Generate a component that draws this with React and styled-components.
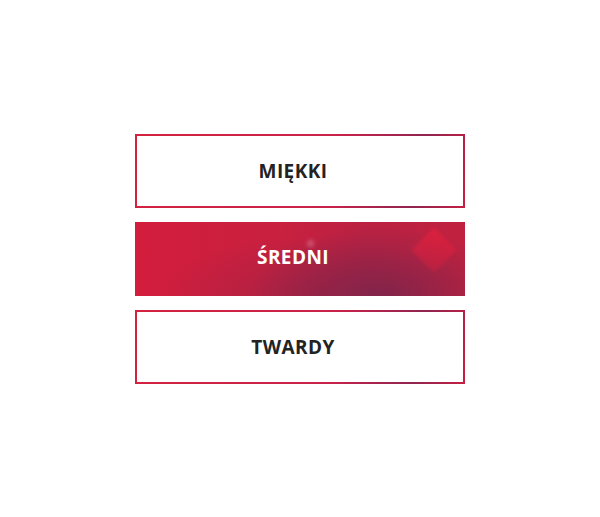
import React, { useState } from "react";
import styled, { createGlobalStyle, css } from "styled-components";

const Global = createGlobalStyle`
  html, body { margin: 0; padding: 0; background: #fff; }
  body { font-family: "Open Sans", "Liberation Sans", sans-serif; }
`;

const Page = styled.div`
  width: 600px;
  height: 517px;
  display: flex;
  align-items: center;
  justify-content: center;
`;

const List = styled.div`
  width: 330px;
  display: flex;
  flex-direction: column;
  gap: 14px;
`;

const Option = styled.button`
  position: relative;
  overflow: hidden;
  height: 74px;
  width: 100%;
  display: flex;
  align-items: center;
  justify-content: center;
  padding: 0 14px 0 0;
  font-family: "Open Sans", "Liberation Sans", sans-serif;
  font-weight: 700;
  font-size: 19px;
  letter-spacing: 0.4px;
  cursor: pointer;
  color: #232323;
  background: #fff;
  border: 2px solid transparent;
  border-image: linear-gradient(100deg, #d4223f 0%, #c9224a 60%, #8f2550 85%, #c41f42 100%) 1;

  ${(p) =>
    p.$active &&
    css`
      color: #fff;
      border: none;
      padding-bottom: 3px;
      background:
        radial-gradient(ellipse 130px 70px at 74% 100%, rgba(128, 36, 74, 0.95) 0%, rgba(128, 36, 74, 0) 100%),
        radial-gradient(ellipse 160px 60px at 55% 100%, rgba(150, 34, 70, 0.6) 0%, rgba(150, 34, 70, 0) 100%),
        linear-gradient(90deg, #d31d3d 0%, #c8203f 45%, #bb2142 70%, #c0213f 100%);

      /* soft diamond near the right edge */
      &::before {
        content: "";
        position: absolute;
        width: 32px;
        height: 32px;
        left: 283px;
        top: 12px;
        transform: rotate(45deg);
        background: linear-gradient(135deg, rgba(228, 32, 62, 0.7), rgba(222, 30, 60, 0.35));
        filter: blur(1.5px);
      }
      /* faint sparkle above the label */
      &::after {
        content: "";
        position: absolute;
        width: 7px;
        height: 7px;
        left: 172px;
        top: 18px;
        border-radius: 50%;
        background: rgba(255, 215, 228, 0.3);
        filter: blur(2px);
      }
    `}
`;

const Label = styled.span`
  position: relative;
  z-index: 1;
`;

const options = ["MIĘKKI", "ŚREDNI", "TWARDY"];

export default function App() {
  const [sel, setSel] = useState(1);
  return (
    <Page>
      <Global />
      <List>
        {options.map((o, i) => (
          <Option key={o} $active={sel === i} onClick={() => setSel(i)}>
            <Label>{o}</Label>
          </Option>
        ))}
      </List>
    </Page>
  );
}
